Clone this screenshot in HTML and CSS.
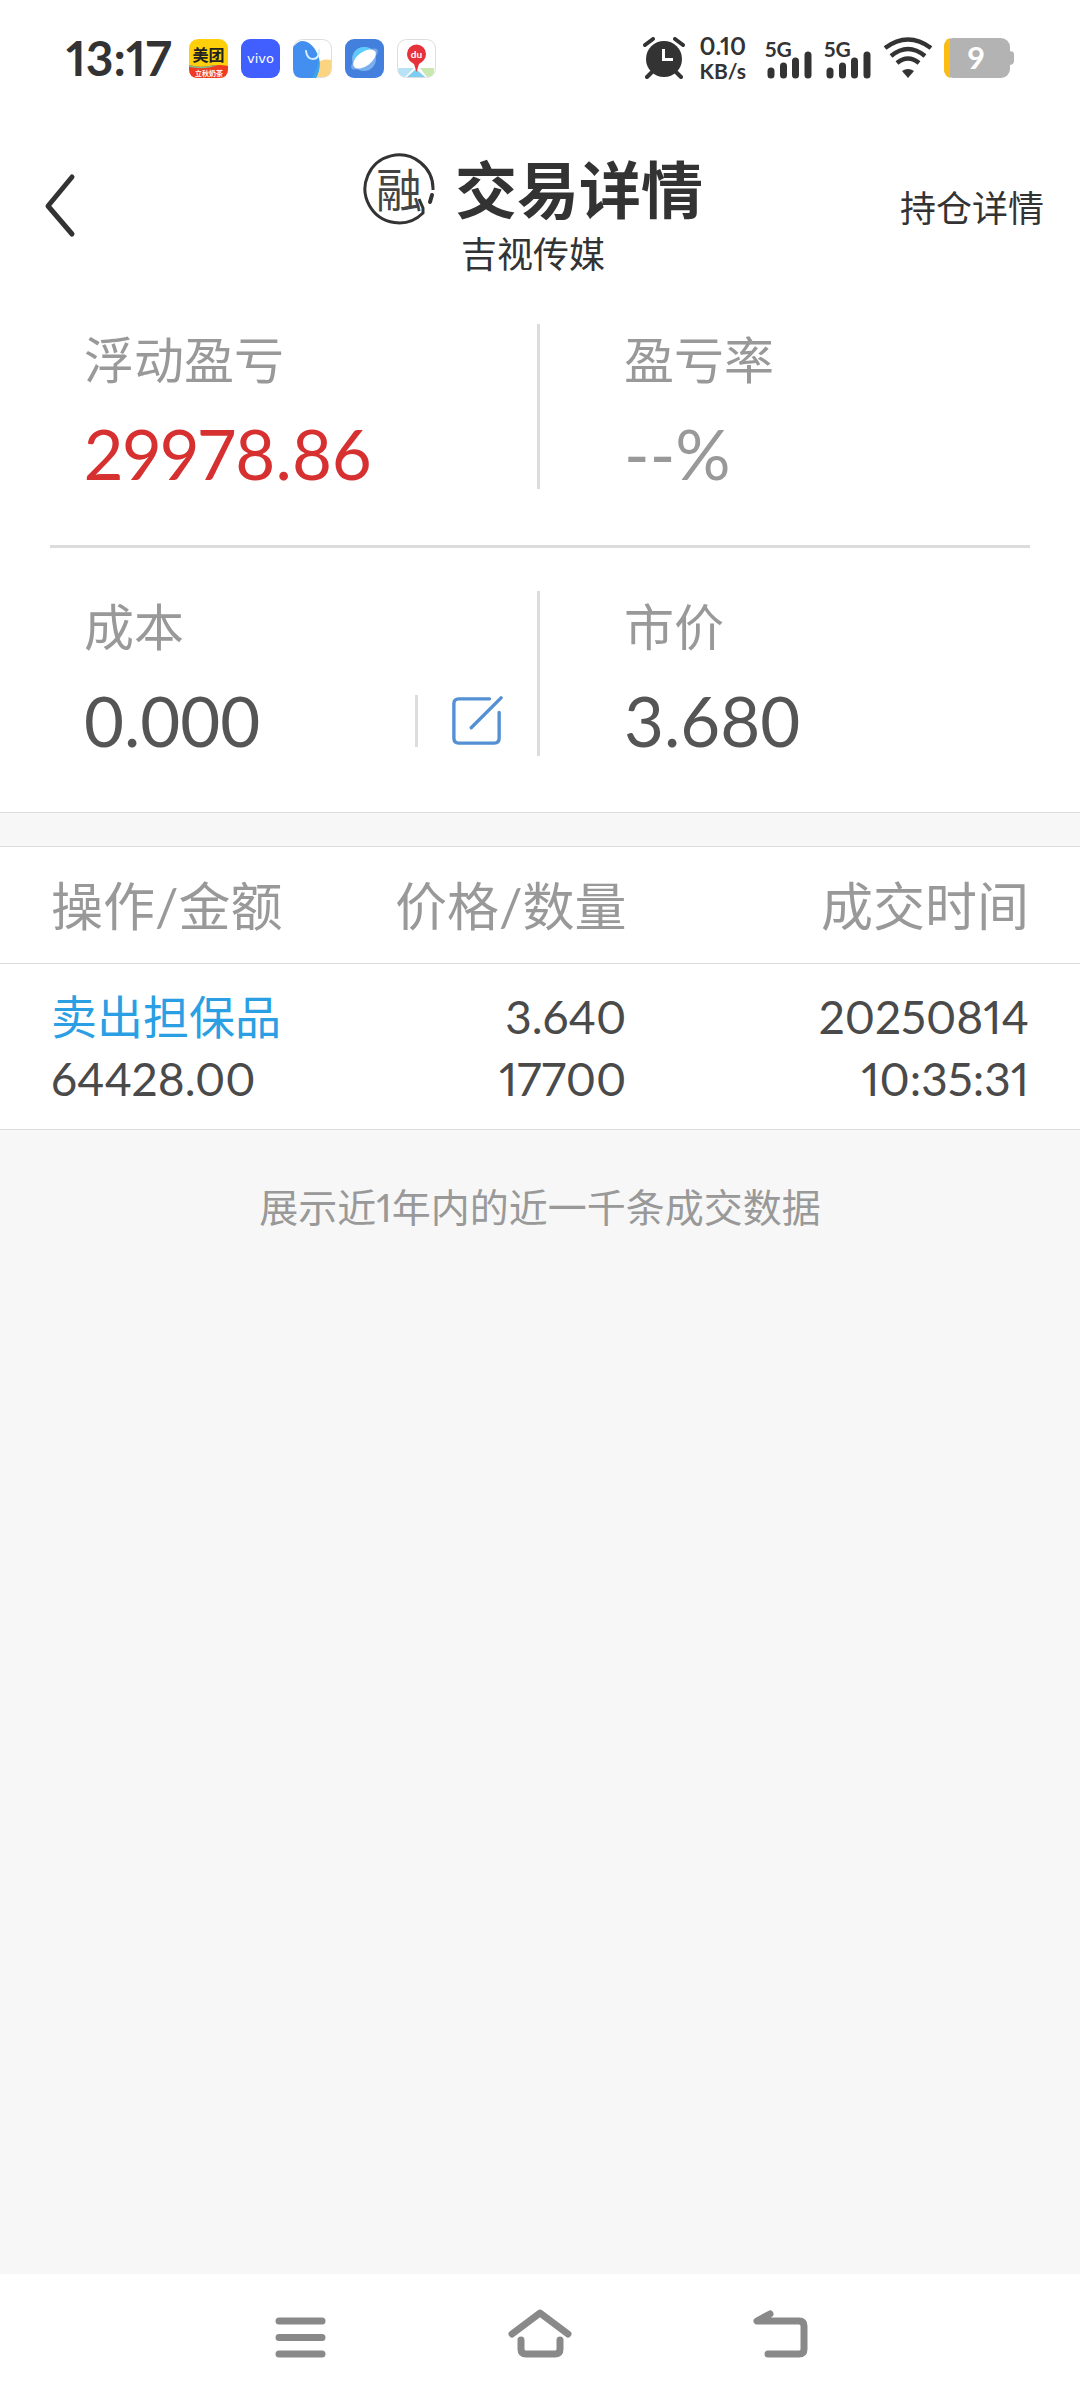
FILE: index.html
```html
<!DOCTYPE html>
<html lang="zh-CN">
<head>
  <meta charset="UTF-8">
  <meta name="viewport" content="width=device-width, initial-scale=1.0">
  <title>交易详情</title>
  <link rel="stylesheet" href="styles.css">
</head>
<body>

  <!-- Status bar -->
  <div class="status-bar">
    <div class="status-left">
      <span class="clock">13:17</span>
      <svg class="app-icon" viewBox="0 0 39 39">
        <rect width="39" height="39" rx="9" fill="#fdd00b"/>
        <path d="M0 26q10 3 20 1t19 0v3q0 9-9 9H9q-9 0-9-9z" fill="#ee3b22"/>
        <path d="M0 26q10 3 20 1l9-1q-12 5-29 2z" fill="#7fc08a"/>
        <text x="19.500" y="22" font-size="16" font-weight="bold" text-anchor="middle" fill="#222">美团</text>
        <text x="20" y="37" font-size="7" font-weight="bold" text-anchor="middle" fill="#fff">立秋奶茶</text>
      </svg>
      <svg class="app-icon" viewBox="0 0 39 39">
        <rect width="39" height="39" rx="9" fill="#415fff"/>
        <text class="wide" x="19.500" y="24" font-size="13" text-anchor="middle" fill="#fff">vivo</text>
      </svg>
      <svg class="app-icon" viewBox="0 0 39 39">
        <rect x=".5" y=".5" width="38" height="38" rx="9" fill="#fff" stroke="#ddd"/>
        <path d="M24 24q6-5 14-3v9q0 8-8 8h-8z" fill="#fbd482"/>
        <path d="M2 6Q8-1 16 4q7 5 10 15 2 11-3 20H9q-9 0-9-9V9q0-2 2-3z" fill="#438ff0"/>
        <path d="M26 19q2 11-3 20h-4q6-10 7-20z" fill="#3da4e8"/>
        <path d="M13 12q1 8 7 8t6-9" fill="none" stroke="#d4edff" stroke-width="2" stroke-linecap="round"/>
      </svg>
      <svg class="app-icon" viewBox="0 0 39 39">
        <rect width="39" height="39" rx="9" fill="#437fdd"/>
        <circle cx="19" cy="20" r="12" fill="#79b0ef"/>
        <path d="M8 17A12 12 0 0 1 30 14L9 26z" fill="#5dcbfc"/>
        <ellipse cx="19.500" cy="20" rx="16" ry="6" transform="rotate(-36 19.500 20)" fill="#78a7ea"/>
        <ellipse cx="19.500" cy="20" rx="13" ry="7" transform="rotate(-36 19.500 20)" fill="#fff"/>
      </svg>
      <svg class="app-icon" viewBox="0 0 39 39">
        <rect x=".5" y=".5" width="38" height="38" rx="9" fill="#fff" stroke="#ddd"/>
        <path d="M2 29h15L8 38Q1 37 1 30z" fill="#b8e2f5"/>
        <path d="M23 29h14q1 9-7 9z" fill="#c8e8b0"/>
        <path d="M19 30l9 8H10z" fill="#7dcdf3"/>
        <path d="M19.500 33L17 25q-7-4-7-10a9.500 9.500 0 0 1 19 0q0 6-7 10z" fill="#e6323a"/>
        <text class="latin" x="19.500" y="19" font-size="10" font-weight="bold" text-anchor="middle" fill="#fff">du</text>
      </svg>
    </div>

    <div class="status-right">
      <svg class="alarm" viewBox="0 0 42 42">
        <circle cx="21" cy="22" r="18" fill="#333"/>
        <path d="M20.500 12v10.500H30" fill="none" stroke="#fff" stroke-width="3"/>
        <path d="M2 8l8-6M32 2l8 6M9 35l-5 5M33 35l5 5" stroke="#333" stroke-width="4" stroke-linecap="round"/>
      </svg>
      <div class="speed"><span>0.10</span><small>KB/s</small></div>
      <div class="signal">
        <span>5G</span>
        <svg viewBox="0 0 48 28">
          <path d="M6 20v4M18.500 15v9M30.500 10v14M43 4v20" stroke="#333" stroke-width="7" stroke-linecap="round"/>
        </svg>
      </div>
      <div class="signal">
        <span>5G</span>
        <svg viewBox="0 0 48 28">
          <path d="M6 20v4M18.500 15v9M30.500 10v14M43 4v20" stroke="#333" stroke-width="7" stroke-linecap="round"/>
        </svg>
      </div>
      <svg class="wifi" viewBox="0 0 50 42">
        <path d="M2 11Q25-6 48 11M8 19Q25 5 42 19M14 26Q25 17 36 26" fill="none" stroke="#333" stroke-width="4.500"/>
        <path d="M19 34q6-4 12 0l-6 7z" fill="#333"/>
      </svg>
      <svg class="battery" viewBox="0 0 70 40">
        <path d="M65 13q5 0 5 3v7q0 4-5 4z" fill="#b3b3b3"/>
        <rect width="66" height="40" rx="9" fill="#b3b3b3"/>
        <path d="M6 0v40Q0 38 0 31V9q0-7 6-9z" fill="#fdbc11"/>
        <text class="latin" x="32" y="31" font-size="31" font-weight="bold" text-anchor="middle" fill="#fff">9</text>
      </svg>
    </div>
  </div>

  <header>
    <button class="back-btn" aria-label="返回">
      <svg viewBox="0 0 32 68">
        <path d="M28 5L4 34l24 28" fill="none" stroke="#333" stroke-width="5" stroke-linecap="round" stroke-linejoin="round"/>
      </svg>
    </button>
    <div class="title">
      <h1>
        <svg class="rong" viewBox="0 0 72 76">
          <path d="M70 38A34 34 0 1 0 60 61V56L56 47" fill="none" stroke="#333" stroke-width="3"/>
          <path d="M69 43l-2 7" stroke="#333" stroke-width="4" stroke-linecap="round"/>
          <text x="36" y="55" font-size="46" font-weight="normal" text-anchor="middle" fill="#444">融</text>
        </svg>
        交易详情
      </h1>
      <p>吉视传媒</p>
    </div>
    <a class="position-link" href="#">持仓详情</a>
  </header>

  <section class="summary">
    <div class="summary-row">
      <div class="stat">
        <div class="stat-label">浮动盈亏</div>
        <div class="stat-value red">29978.86</div>
      </div>
      <div class="stat">
        <div class="stat-label">盈亏率</div>
        <div class="stat-value gray">--%</div>
      </div>
    </div>
    <div class="summary-row">
      <div class="stat">
        <div class="stat-label">成本</div>
        <div class="stat-value">0.000</div>
        <button class="edit-btn" aria-label="修改成本">
          <svg viewBox="0 0 54 54">
            <path d="M40 4H8Q3 4 3 9V45Q3 50 8 50H45Q50 50 50 45V18M21 34L52 3" fill="none" stroke="#5490d4" stroke-width="3.500" stroke-linecap="round"/>
          </svg>
        </button>
      </div>
      <div class="stat">
        <div class="stat-label">市价</div>
        <div class="stat-value">3.680</div>
      </div>
    </div>
  </section>

  <main>
    <table class="deals">
      <thead>
        <tr>
          <th>操作/金额</th>
          <th>价格/数量</th>
          <th>成交时间</th>
        </tr>
      </thead>
      <tbody>
        <tr>
          <td><span class="sell">卖出担保品</span><br>64428.00</td>
          <td>3.640<br>17700</td>
          <td>20250814<br>10:35:31</td>
        </tr>
      </tbody>
    </table>
    <p class="tip">展示近1年内的近一千条成交数据</p>
  </main>

  <!-- System navigation -->
  <nav>
    <button aria-label="最近任务">
      <svg viewBox="0 0 64 64"><path d="M11 16h43M11 32.500h43M11 49h43"/></svg>
    </button>
    <button aria-label="主屏幕">
      <svg viewBox="0 0 64 64"><path d="M4 29L32 8l28 21M13 35v9q0 5 5 5h29q5 0 5-5v-9"/></svg>
    </button>
    <button aria-label="返回上一页">
      <svg viewBox="0 0 64 64"><path d="M22 9L9 16H51q5 0 5 5v23q0 5-5 5H20"/></svg>
    </button>
  </nav>

</body>
</html>
```

FILE: styles.css
```css
* {
  box-sizing: border-box;
}
body {
  margin: 0;
  min-height: 100vh;
  display: flex;
  flex-direction: column;
  font-family: Lato, "Noto Sans CJK SC", sans-serif;
  font-variant-numeric: proportional-nums;
  background: #fff;
  color: #333;
}
h1, p {
  margin: 0;
}
button {
  padding: 0;
  border: none;
  background: none;
  cursor: pointer;
}
svg {
  display: block;
}
svg text {
  font-family: "Noto Sans CJK SC", sans-serif;
}
svg text.latin {
  font-family: Lato, sans-serif;
}
svg text.wide {
  font-family: "DejaVu Sans", sans-serif;
}

/* Status bar */
.status-bar {
  height: 116px;
  padding: 0 66px;
  display: flex;
  align-items: center;
  justify-content: space-between;
}
.status-left,
.status-right {
  display: flex;
  align-items: center;
}
.status-left {
  gap: 13px;
}
.status-right {
  gap: 11px;
}
.clock {
  margin-right: 4px;
  font-size: 48px;
  font-weight: bold;
  line-height: 48px;
}
.app-icon {
  width: 39px;
  height: 39px;
}
.alarm {
  width: 42px;
  height: 42px;
  margin-right: 4px;
}
.speed {
  display: flex;
  flex-direction: column;
  align-items: center;
  margin-right: 8px;
  font-size: 24px;
  font-weight: bold;
  line-height: 25px;
}
.speed small {
  font-size: 21px;
}
.signal {
  width: 48px;
  font-size: 21px;
  font-weight: bold;
  line-height: 24px;
}
.signal span {
  display: block;
}
.signal svg {
  width: 48px;
  height: 28px;
  margin-top: -10px;
}
.wifi {
  width: 50px;
  height: 42px;
}
.battery {
  width: 70px;
  height: 40px;
}

/* Header */
header {
  display: grid;
  grid-template-columns: 1fr auto 1fr;
  align-items: center;
  height: 180px;
  padding: 0 36px 0 44px;
}
.back-btn {
  justify-self: start;
}
.back-btn svg {
  width: 32px;
  height: 68px;
}
.title {
  padding: 20px 22px 0 0;
  text-align: center;
}
.title h1 {
  display: flex;
  align-items: center;
  gap: 20px;
  font-size: 62px;
  line-height: 76px;
}
.rong {
  width: 72px;
  height: 76px;
}
.title p {
  font-size: 36px;
  line-height: 52px;
}
.position-link {
  justify-self: end;
  font-size: 36px;
  color: #333;
  text-decoration: none;
}

/* Summary */
.summary {
  padding: 0 50px;
}
.summary-row {
  display: grid;
  grid-template-columns: 1fr 1fr;
  padding: 28px 0 56px;
}
.summary-row + .summary-row {
  padding-top: 43px;
  border-top: 3px solid #dcdcdc;
}
.stat {
  display: grid;
  grid-template-columns: 1fr auto;
  align-items: center;
  align-content: start;
  height: 165px;
  padding: 0 34px;
}
.stat:first-child {
  border-right: 3px solid #dcdcdc;
}
.stat + .stat {
  padding-left: 84px;
}
.stat-label {
  grid-column: 1 / -1;
  font-size: 50px;
  line-height: 72px;
  color: #999;
}
.stat-value {
  font-size: 69px;
  font-variant-numeric: tabular-nums;
  line-height: 116px;
  color: #555;
}
.stat-value.red {
  font-variant-numeric: proportional-nums;
  color: #d63031;
}
.stat-value.gray {
  color: #999;
}
.edit-btn {
  padding-left: 33px;
  border-left: 3px solid #dcdcdc;
}
.edit-btn svg {
  width: 52px;
  height: 52px;
}

/* Deal list */
main {
  flex: 1;
  padding-top: 33px;
  border-top: 1px solid #dcdcdc;
  background: #f7f7f7;
}
.deals {
  width: 100%;
  table-layout: fixed;
  border-collapse: collapse;
  background: #fff;
}
.deals tr {
  border-top: 1px solid #dcdcdc;
  border-bottom: 1px solid #dcdcdc;
}
.deals th,
.deals td {
  padding: 0;
  text-align: right;
  font-weight: normal;
}
.deals th {
  height: 117px;
  padding-top: 2px;
  font-size: 52px;
  line-height: 76px;
  color: #999;
}
.deals td {
  height: 166px;
  padding-top: 2px;
  font-size: 46px;
  line-height: 62px;
  color: #4a4a4a;
}
.deals th:first-child,
.deals td:first-child {
  width: 30%;
  padding-left: 51px;
  text-align: left;
}
.deals th:nth-child(2) {
  width: 28%;
}
.deals th:last-child,
.deals td:last-child {
  padding-right: 51px;
}
.sell {
  color: #2b9fe3;
}
.tip {
  padding: 48px 0;
  font-size: 39px;
  line-height: 58px;
  text-align: center;
  color: #999;
}

/* System navigation */
nav {
  display: flex;
  justify-content: center;
  align-items: center;
  gap: 176px;
  height: 126px;
}
nav svg {
  width: 64px;
  height: 64px;
  fill: none;
  stroke: #898989;
  stroke-width: 7;
  stroke-linecap: round;
  stroke-linejoin: round;
}
```
